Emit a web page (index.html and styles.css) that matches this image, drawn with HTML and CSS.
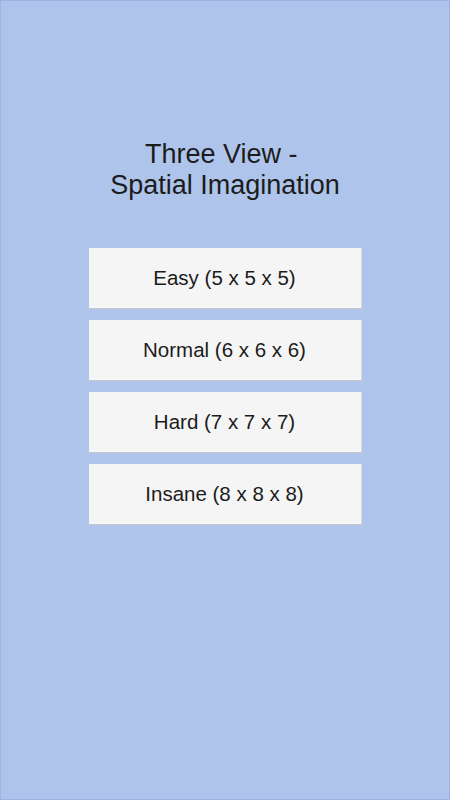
FILE: index.html
```html
<!DOCTYPE html>
<html>
<head>
<meta charset="utf-8">
<link rel="stylesheet" href="styles.css">
</head>
<body>
<div class="screen">
  <h1 class="title">Three View -&nbsp;<br>Spatial Imagination</h1>
  <div class="menu">
    <button class="level">Easy (5 x 5 x 5)</button>
    <button class="level">Normal (6 x 6 x 6)</button>
    <button class="level">Hard (7 x 7 x 7)</button>
    <button class="level">Insane (8 x 8 x 8)</button>
  </div>
</div>
</body>
</html>
```
FILE: styles.css
```css
html, body {
  margin: 0;
  padding: 0;
}
body {
  width: 450px;
  height: 800px;
  font-family: "Liberation Sans", Arial, sans-serif;
}
.screen {
  box-sizing: border-box;
  width: 450px;
  height: 800px;
  background: #aec4ea;
  border: 1px solid #9db4e4;
  display: flex;
  flex-direction: column;
  align-items: center;
  padding-top: 138px;
}
.title {
  margin: 0;
  font-weight: 400;
  font-size: 27px;
  line-height: 31px;
  color: #1c1c1c;
  text-align: center;
}
.menu {
  margin-top: 47px;
  display: flex;
  flex-direction: column;
  gap: 11px;
}
.level {
  box-sizing: border-box;
  width: 273px;
  height: 61px;
  margin: 0;
  padding: 0;
  background: #f5f5f5;
  border: none;
  border-bottom: 1px solid #c4c7cc;
  border-right: 1px solid #d8dade;
  font-family: "Liberation Sans", Arial, sans-serif;
  font-size: 20.5px;
  color: #1c1c1c;
}
```
